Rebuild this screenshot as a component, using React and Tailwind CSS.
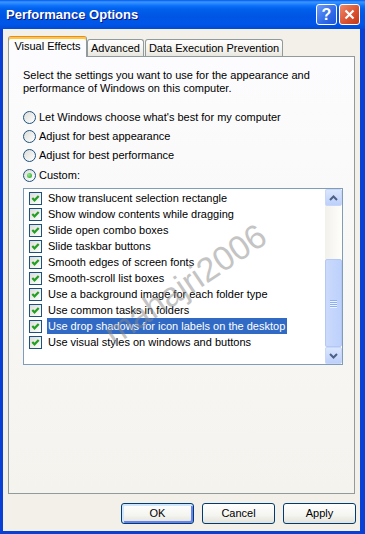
const items = [
  "Show translucent selection rectangle",
  "Show window contents while dragging",
  "Slide open combo boxes",
  "Slide taskbar buttons",
  "Smooth edges of screen fonts",
  "Smooth-scroll list boxes",
  "Use a background image for each folder type",
  "Use common tasks in folders",
  "Use drop shadows for icon labels on the desktop",
  "Use visual styles on windows and buttons",
];

const radios = [
  "Let Windows choose what's best for my computer",
  "Adjust for best appearance",
  "Adjust for best performance",
  "Custom:",
];

function Check() {
  return (
    <div className="w-[13px] h-[13px] shrink-0 border border-[#1c5180] bg-[linear-gradient(135deg,#dcdcd7,#ffffff)] flex items-center justify-center">
      <svg width="11" height="11" viewBox="0 0 11 11">
        <polyline points="2.3,5 4.5,7.3 8.7,3" fill="none" stroke="#21a121" strokeWidth="2.2" />
      </svg>
    </div>
  );
}

function Radio({ on }) {
  return (
    <div className="w-[13px] h-[13px] shrink-0 rounded-full border border-[#1c5180] bg-[linear-gradient(135deg,#dcdcd7,#ffffff)] flex items-center justify-center">
      {on && <div className="w-[5px] h-[5px] rounded-full bg-[radial-gradient(circle_at_35%_35%,#8fe88c,#21a121)]" />}
    </div>
  );
}

function ScrollBtn({ up }) {
  return (
    <div className="h-[17px] shrink-0 rounded-[2px] border border-[#c8d6f8] bg-[linear-gradient(to_bottom,#dbe6fd,#bcd0fb)] flex items-center justify-center">
      <svg width="9" height="6" viewBox="0 0 9 6">
        <polyline
          points={up ? "1,5 4.5,1.5 8,5" : "1,1 4.5,4.5 8,1"}
          fill="none"
          stroke="#4d6185"
          strokeWidth="2"
        />
      </svg>
    </div>
  );
}

function Button({ children, def }) {
  return (
    <div
      className={
        "w-[73px] h-[21px] rounded-[3px] border border-[#003c74] bg-[linear-gradient(to_bottom,#ffffff,#f4f4f0_60%,#e3e2da)] flex items-center justify-center " +
        (def ? "shadow-[inset_1px_1px_0_1px_#cee7ff,inset_-1px_-1px_0_1px_#6982ee]" : "")
      }
    >
      {children}
    </div>
  );
}

export default function App() {
  return (
    <div className="relative w-[365px] h-[534px] overflow-hidden flex flex-col bg-[#0a3fd6] font-['Liberation_Sans',Arial,sans-serif] text-[11px] leading-[13px] text-black">
      {/* Title bar */}
      <div className="h-[29px] shrink-0 flex items-center pl-[6px] pr-[4px] bg-[linear-gradient(to_bottom,#0058ee_0px,#3d95ff_2px,#2184ff_4px,#0b6ff9_6px,#0060ec_9px,#0055e5_16px,#0056e8_24px,#004ad8_29px)]">
        <div className="flex-1 text-white font-bold text-[13px] leading-[16px] [text-shadow:1px_1px_0_#0a1883]">
          Performance Options
        </div>
        <div className="flex gap-[2px] mr-[1px]">
          <div className="w-[21px] h-[21px] rounded-[3px] border border-white bg-[linear-gradient(135deg,#6e9bf9,#2f6ae8_60%,#1f55d4)] flex items-center justify-center text-white font-bold text-[16px] leading-none">
            ?
          </div>
          <div className="w-[21px] h-[21px] rounded-[3px] border border-white bg-[linear-gradient(135deg,#ee8a6c,#d8502e_60%,#c13a18)] flex items-center justify-center">
            <svg width="11" height="11" viewBox="0 0 11 11">
              <path d="M1.5 1.5 L9.5 9.5 M9.5 1.5 L1.5 9.5" stroke="white" strokeWidth="2.2" />
            </svg>
          </div>
        </div>
      </div>

      {/* Body */}
      <div className="flex-1 ml-[3px] mr-[5px] mb-[3px] bg-[#f2f0e8] flex flex-col px-[5px] pt-[7px]">
        {/* Tabs */}
        <div className="relative z-10 h-[21px] flex items-end">
          <div className="w-[79px] h-[21px] rounded-t-[3px] border border-b-0 border-[#919b9c] border-t-[#e68b2c] shadow-[inset_0_2px_0_#ffc83c] bg-[#fcfcfe] flex items-center justify-center pb-[1px]">
            Visual Effects
          </div>
          <div className="w-[57px] h-[17px] mb-[1px] rounded-t-[3px] border border-b-0 border-[#919b9c] bg-[linear-gradient(to_bottom,#ffffff,#f1f0ea_70%,#e7e6df)] flex items-center justify-center pt-[1px]">
            Advanced
          </div>
          <div className="w-[138px] h-[17px] mb-[1px] ml-[1px] rounded-t-[3px] border border-b-0 border-[#919b9c] bg-[linear-gradient(to_bottom,#ffffff,#f1f0ea_70%,#e7e6df)] flex items-center justify-center pt-[1px]">
            Data Execution Prevention
          </div>
        </div>

        {/* Panel */}
        <div className="h-[438px] -mt-[1px] shrink-0 border border-[#919b9c] bg-[linear-gradient(to_bottom,#fcfcfe,#f4f3ee)] pl-[14px] pt-[12px]">
          <p>
            Select the settings you want to use for the appearance and
            <br />
            performance of Windows on this computer.
          </p>

          <div className="mt-[13px] flex flex-col">
            {radios.map((r, i) => (
              <div key={r} className={(i === 3 ? "h-[20px]" : "h-[19px]") + " flex items-center"}>
                <Radio on={i === 3} />
                <span className="ml-[3px]">{r}</span>
              </div>
            ))}
          </div>

          <div className="mt-[3px] w-[320px] h-[177px] border border-[#7f9db9] bg-white flex">
            <div className="flex-1 pt-[1px]">
              {items.map((t, i) => (
                <div key={t} className="h-[16px] flex items-center pl-[5px]">
                  <Check />
                  <span
                    className={
                      "ml-[5px] h-[16px] flex items-center pl-[1px] pr-[2px] " +
                      (i === 8 ? "bg-[#316ac5] text-white" : "")
                    }
                  >
                    {t}
                  </span>
                </div>
              ))}
            </div>
            <div className="w-[17px] flex flex-col bg-[linear-gradient(to_right,#f3f1ec,#fefefb)]">
              <ScrollBtn up />
              <div className="h-[53px] shrink-0" />
              <div className="flex-1 rounded-[2px] border border-[#b4c8f6] bg-[linear-gradient(to_right,#cbdafc,#bdd1fb)] flex flex-col items-center justify-center gap-[1px]">
                <div className="w-[7px] h-[1px] bg-[#8cb0f8] shadow-[0_1px_0_#eef4fe]" />
                <div className="w-[7px] h-[1px] bg-[#8cb0f8] shadow-[0_1px_0_#eef4fe]" />
                <div className="w-[7px] h-[1px] bg-[#8cb0f8] shadow-[0_1px_0_#eef4fe]" />
                <div className="w-[7px] h-[1px] bg-[#8cb0f8] shadow-[0_1px_0_#eef4fe]" />
              </div>
              <ScrollBtn />
            </div>
          </div>
        </div>

        {/* Buttons */}
        <div className="mt-[9px] -mr-[1px] flex justify-end gap-[8px]">
          <Button def>OK</Button>
          <Button>Cancel</Button>
          <Button>Apply</Button>
        </div>
      </div>

      {/* Watermark */}
      <div className="absolute left-[185px] top-[284px] -translate-x-1/2 -translate-y-1/2 rotate-[-34deg] whitespace-nowrap text-[34px] leading-none text-[#8a8a8a] opacity-50 pointer-events-none">
        mahajri2006
      </div>
    </div>
  );
}
